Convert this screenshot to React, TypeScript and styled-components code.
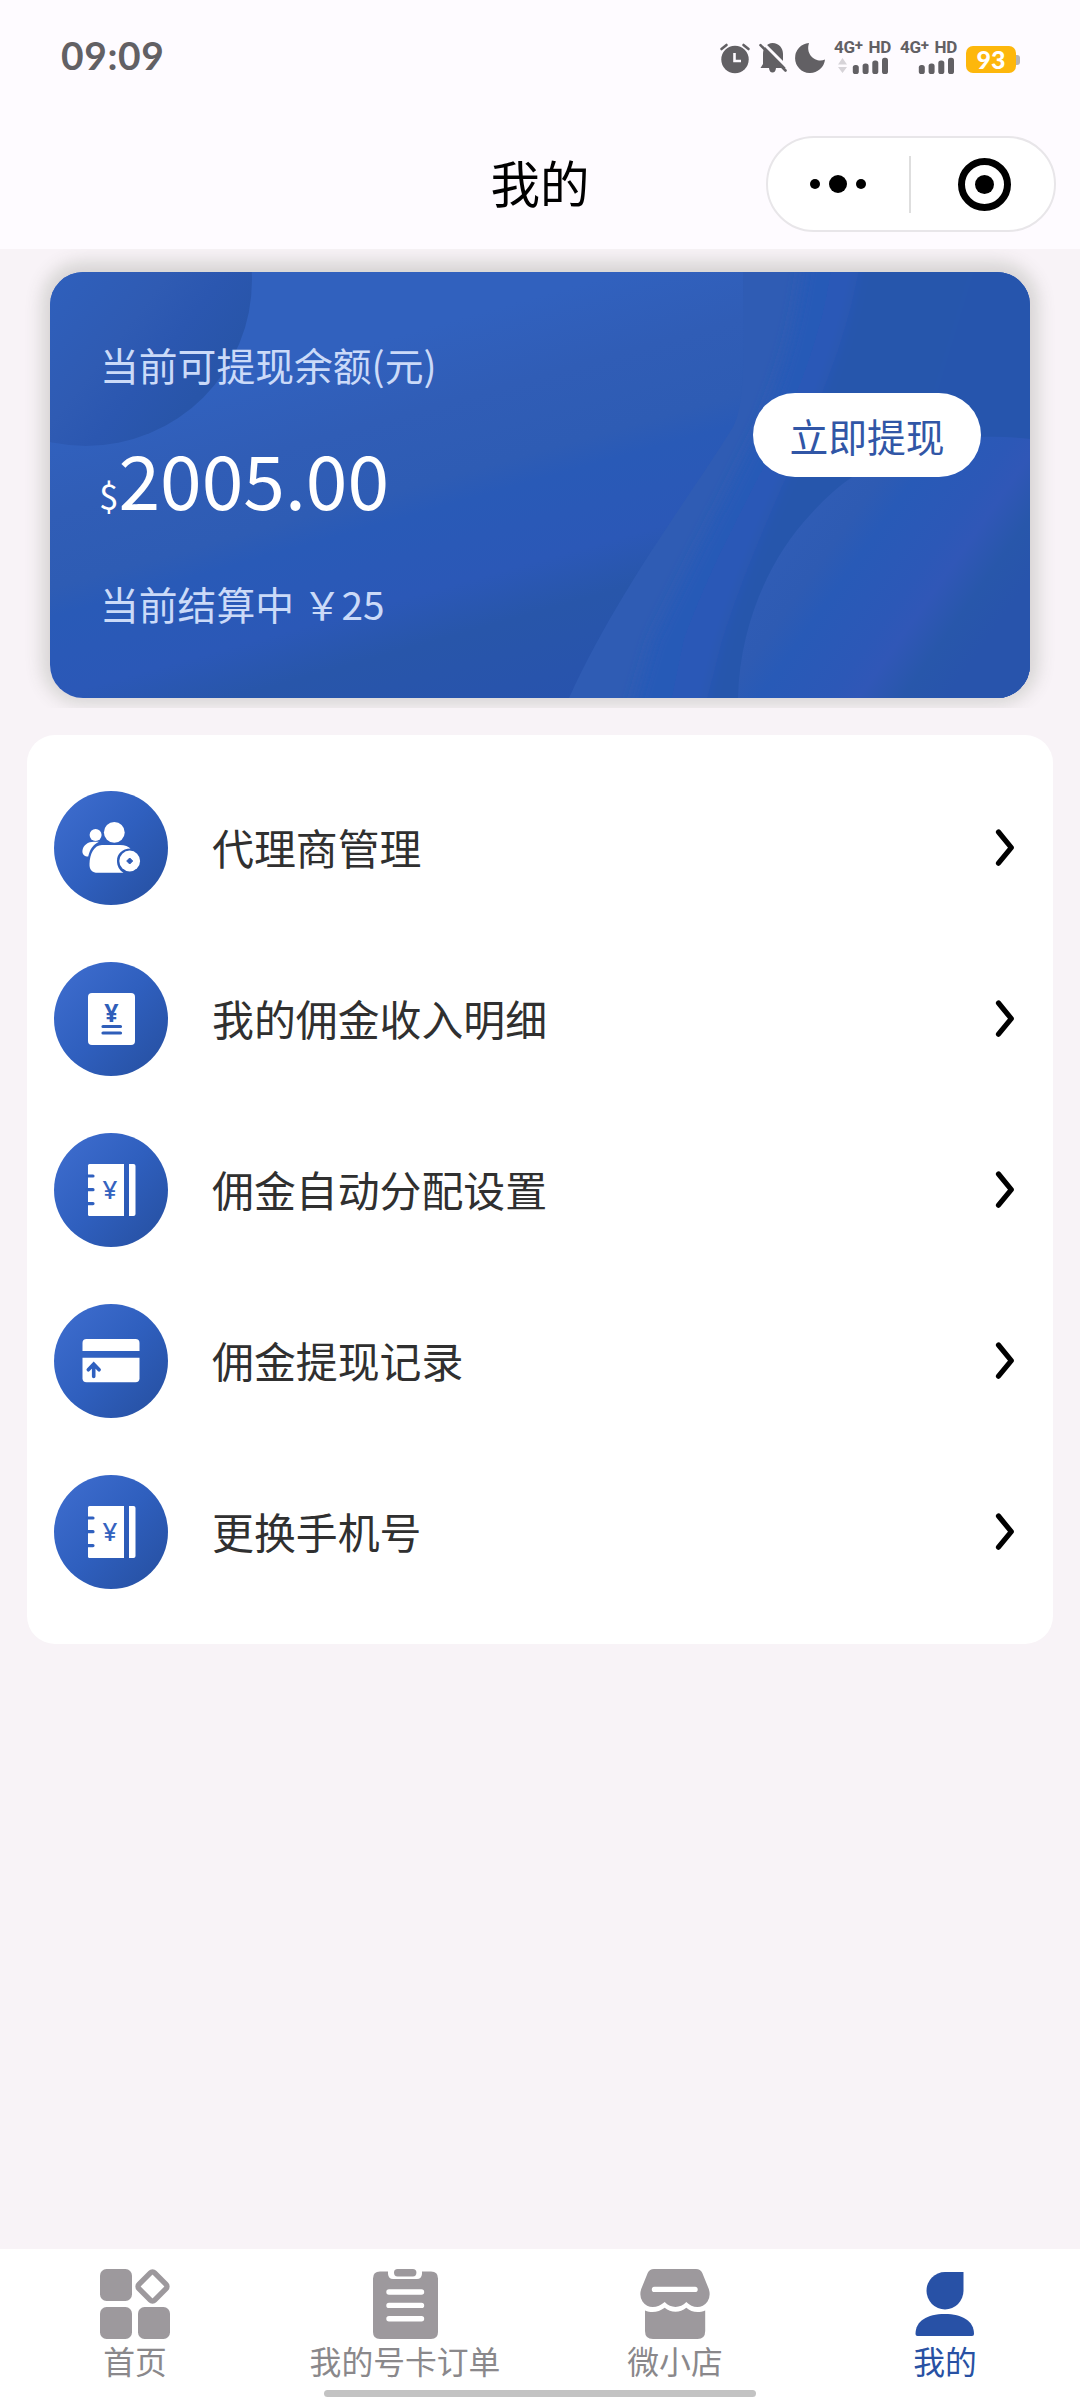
import React from "react";
import styled, { createGlobalStyle } from "styled-components";

const GlobalStyle = createGlobalStyle`
  *, *::before, *::after { box-sizing: border-box; }
  body {
    margin: 0;
    background: #f8f3f7;
    font-family: "Noto Sans CJK SC", "Noto Sans", sans-serif;
  }
  svg { display: block; }
`;

const Screen = styled.div`
  width: 1080px;
  height: 2400px;
  display: flex;
  flex-direction: column;
  overflow: hidden;
  background: #f8f3f7;
`;

/* ---------- header ---------- */

const Header = styled.header`
  height: 249px;
  flex: none;
  background: #fefbff;
`;

const StatusBar = styled.div`
  height: 113px;
  padding: 0 60px 0 61px;
  display: flex;
  justify-content: space-between;
`;

const Clock = styled.div`
  padding-top: 31px;
  font: 700 39px/48px Lato, sans-serif;
  letter-spacing: 0.6px;
  color: #626064;
`;

const StatusIcons = styled.div`
  display: flex;
  align-items: flex-start;
  padding-top: 40px;
`;

const StatusGlyph = styled.svg<{ $gap: number }>`
  margin-right: ${(p) => p.$gap}px;
  overflow: visible;
`;

const Network = styled.div<{ $gap: number }>`
  width: 57px;
  margin-right: ${(p) => p.$gap}px;
`;

const NetworkLabel = styled.div`
  display: flex;
  justify-content: space-between;
  height: 15px;
  font: 700 17px/15px Roboto, sans-serif;
  letter-spacing: -0.3px;
  color: #626064;
`;

const Plus = styled.span`
  font-size: 15px;
  line-height: 1;
  display: inline-block;
  transform: translateY(-3px);
`;

const Battery = styled.div`
  display: flex;
  align-items: center;
  padding-top: 6px;
`;

const BatteryBody = styled.div`
  width: 50px;
  height: 27px;
  border-radius: 7px;
  background: #fdb70c;
  color: #fff;
  text-align: center;
  font: 900 25px/27px Lato, sans-serif;
`;

const BatteryTip = styled.div`
  width: 4px;
  height: 10px;
  border-radius: 0 3px 3px 0;
  background: #b4b4b6;
`;

const TitleBar = styled.div`
  height: 136px;
  display: grid;
  grid-template-columns: 1fr auto 1fr;
  align-items: start;
  padding: 23px 24px 0 24px;
`;

const Title = styled.h1`
  grid-column: 2;
  margin: 0;
  font-size: 49.5px;
  font-weight: 400;
  line-height: 92px;
  color: #000;
`;

const Capsule = styled.div`
  justify-self: end;
  width: 290px;
  height: 96px;
  border: 2px solid #e8e6e9;
  border-radius: 48px;
  background: #fff;
  display: flex;
  align-items: center;
`;

const CapsuleHalf = styled.div<{ $start?: number; $end?: number }>`
  flex: 1;
  display: flex;
  align-items: center;
  justify-content: center;
  gap: 9px;
  padding-left: ${(p) => p.$start ?? 0}px;
  padding-right: ${(p) => p.$end ?? 0}px;
`;

const CapsuleDivider = styled.div`
  width: 2px;
  height: 57px;
  background: #dedede;
`;

const Dot = styled.span<{ $size: number }>`
  width: ${(p) => p.$size}px;
  height: ${(p) => p.$size}px;
  border-radius: 50%;
  background: #000;
`;

const Ring = styled.span`
  width: 53px;
  height: 53px;
  border: 7px solid #000;
  border-radius: 50%;
  display: flex;
  align-items: center;
  justify-content: center;
`;

/* ---------- balance card ---------- */

const CardFrame = styled.section`
  height: 459px;
  flex: none;
  padding: 23px 50px 10px;
  overflow: hidden;
`;

const BalanceCard = styled.div`
  position: relative;
  width: 980px;
  height: 426px;
  border-radius: 33px;
  overflow: hidden;
  display: flex;
  justify-content: space-between;
  padding: 0 49px 0 50px;
`;

const CardShadow = styled.div`
  border-radius: 33px;
  box-shadow: 0 -2px 17px 8px rgba(70, 80, 60, 0.19);
`;

const CardArt = styled.svg`
  position: absolute;
  inset: 0;
`;

const Amounts = styled.div`
  position: relative;
  display: flex;
  flex-direction: column;
`;

const Caption = styled.div<{ $top: number }>`
  margin-top: ${(p) => p.$top}px;
  font-size: 38.8px;
  line-height: 56px;
  color: #cbdaf8;
  white-space: pre;
`;

const Balance = styled.div`
  margin-top: 31px;
  height: 110px;
  display: flex;
  align-items: baseline;
  color: #fff;
  font-size: 75px;
  line-height: 110px;
`;

const Currency = styled.span`
  margin-left: -1px;
  font-size: 35px;
`;

const WithdrawButton = styled.button`
  position: relative;
  margin-top: 121px;
  width: 228px;
  height: 84px;
  border: 0;
  padding: 0;
  border-radius: 42px;
  background: #fff;
  color: #3156a6;
  font: 400 38.8px/83px "Noto Sans CJK SC", sans-serif;
`;

/* ---------- menu ---------- */

const Menu = styled.ul`
  list-style: none;
  margin: 27px 27px 0;
  padding: 27px 0;
  border-radius: 28px;
  background: #fff;
`;

const MenuRow = styled.li`
  height: 171px;
  padding: 0 38px 0 27px;
  display: flex;
  align-items: center;
`;

const MenuLabel = styled.span`
  flex: 1;
  margin-left: 44px;
  padding-bottom: 1px;
  font-size: 41.9px;
  line-height: 60px;
  color: #303030;
`;

/* ---------- tab bar ---------- */

const TabBar = styled.nav`
  margin-top: auto;
  height: 151px;
  flex: none;
  background: #fff;
  display: flex;
  flex-direction: column;
`;

const Tabs = styled.div`
  height: 141px;
  padding-top: 20px;
  display: grid;
  grid-template-columns: repeat(4, 1fr);
`;

const Tab = styled.div<{ $active?: boolean }>`
  display: flex;
  flex-direction: column;
  align-items: center;
  font-size: 31.8px;
  line-height: 43px;
  color: ${(p) => (p.$active ? "#2851a3" : "#8a888b")};
`;

const HomeIndicator = styled.div`
  align-self: center;
  width: 432px;
  height: 7px;
  border-radius: 4px;
  background: #c3c3c3;
`;

/* ---------- drawings ---------- */

const GREY = "#626064";

const Bars = ({ arrows }: { arrows?: boolean }) => (
  <svg width="57" height="20" viewBox="0 0 57 20">
    {arrows && (
      <path d="M4 9.5L8.5 3L13 9.5zM4 12L8.5 18L13 12z" fill="#d6d3d8" />
    )}
    <g fill={GREY}>
      <rect x="18.8" y="10" width="6" height="9" rx="2.6" />
      <rect x="28.6" y="8.5" width="6" height="10.5" rx="2.6" />
      <rect x="38.3" y="5.5" width="6" height="13.5" rx="2.6" />
      <rect x="48" y="2.7" width="6" height="16.3" rx="2.6" />
    </g>
  </svg>
);

const NetworkInfo = ({ arrows, gap }: { arrows?: boolean; gap: number }) => (
  <Network $gap={gap}>
    <NetworkLabel>
      <span>
        4G<Plus>+</Plus>
      </span>
      <span>HD</span>
    </NetworkLabel>
    <Bars arrows={arrows} />
  </Network>
);

const CardBackground = () => (
  <CardArt width="980" height="426" viewBox="0 0 980 426">
    <defs>
      <linearGradient id="base" gradientUnits="userSpaceOnUse" x1="0" y1="0" x2="150" y2="533">
        <stop offset="0.28" stopColor="#3161be" />
        <stop offset="0.42" stopColor="#305db6" />
        <stop offset="0.55" stopColor="#2e5cb4" />
        <stop offset="0.6" stopColor="#295ab7" />
        <stop offset="0.74" stopColor="#2b58b7" />
        <stop offset="0.83" stopColor="#2856aa" />
        <stop offset="1" stopColor="#2853ad" />
      </linearGradient>
      <linearGradient id="blob" gradientUnits="userSpaceOnUse" x1="10" y1="10" x2="150" y2="120">
        <stop offset="0" stopColor="#2f5fbb" />
        <stop offset="0.45" stopColor="#2f5bb3" />
        <stop offset="0.7" stopColor="#2b57b0" />
        <stop offset="1" stopColor="#2855a9" />
      </linearGradient>
      <linearGradient id="orb" gradientUnits="userSpaceOnUse" x1="735" y1="240" x2="930" y2="378">
        <stop offset="0" stopColor="#305db6" />
        <stop offset="0.24" stopColor="#2e5bb3" />
        <stop offset="0.36" stopColor="#285ab7" />
        <stop offset="0.6" stopColor="#2c58b7" />
        <stop offset="0.7" stopColor="#3057b7" />
        <stop offset="0.85" stopColor="#2857ab" />
        <stop offset="1" stopColor="#2854ac" />
      </linearGradient>
      <filter id="soft" x="-10%" y="-10%" width="120%" height="120%">
        <feGaussianBlur stdDeviation="7" />
      </filter>
      <clipPath id="ribbonEdge">
        <path d="M519 426C570 315 640 225 683 155C697 130 693 60 693 0H980V426z" />
      </clipPath>
    </defs>
    <rect width="980" height="426" fill="url(#base)" />
    <g clipPath="url(#ribbonEdge)">
      <rect x="500" width="480" height="426" fill="#2f5cb4" />
      <g filter="url(#soft)">
        <path d="M580 446L603 368C650 270 690 200 712 150C735 90 745 60 756 -20H1020V446z" fill="#285ab7" />
        <path d="M618 446L634 368C670 270 715 200 735 150C760 90 775 50 784 -20H1020V446z" fill="#2c58b7" />
        <path d="M652 446L672 368C700 280 735 210 760 150C785 90 800 50 812 -20H1020V446z" fill="#2857ac" />
        <path d="M930 -20C905 60 880 150 850 240H1020V-20z" fill="#2854ad" />
      </g>
    </g>
    <path d="M688 426C690 345 725 280 760 243C815 180 890 157 980 167V426z" fill="url(#orb)" />
    <circle cx="36" cy="8" r="166" fill="url(#blob)" />
  </CardArt>
);

const Badge = ({ children }: { children: React.ReactNode }) => (
  <svg width="114" height="114" viewBox="0 0 114 114">
    <defs>
      <linearGradient id="badge" x1="0.12" y1="0.15" x2="0.88" y2="0.85">
        <stop offset="0" stopColor="#3b6acb" />
        <stop offset="0.5" stopColor="#2f5fbe" />
        <stop offset="1" stopColor="#2853a7" />
      </linearGradient>
    </defs>
    <circle cx="57" cy="57" r="57" fill="url(#badge)" />
    {children}
  </svg>
);

const AgentsIcon = () => (
  <Badge>
    <circle cx="41.6" cy="44" r="6" fill="#fff" />
    <path d="M28.4 60C29 54 34 50.7 40 50.7H45C39 53.5 36 58 34.2 65.5C30.5 65.5 28.2 63.5 28.4 60z" fill="#fff" />
    <circle cx="60.3" cy="41.4" r="10.4" fill="#fff" />
    <path d="M48 54H66C71 54 74.5 55.5 76.5 57.6C68 57.8 63 63 63 70C63 75 65.5 79.5 69.5 81.8H44C38 81.8 35.3 78.5 35.5 73C35.8 63 40 54 48 54z" fill="#fff" />
    <circle cx="75.7" cy="70" r="10.4" fill="#fff" />
    <path d="M75.7 67L78.7 70L75.7 73L72.7 70z" fill="#2f5cb8" stroke="#2f5cb8" strokeLinejoin="round" />
  </Badge>
);

const StatementIcon = () => (
  <Badge>
    <rect x="34" y="31" width="47" height="52" rx="4" fill="#fff" />
    <text x="57.5" y="60" textAnchor="middle" fontFamily="Noto Sans, sans-serif" fontWeight="700" fontSize="25" fill="#2f5eb9">
      ¥
    </text>
    <path d="M49 64.5H66.500M49 71H66.500" stroke="#2f5eb9" strokeWidth="3.200" strokeLinecap="round" />
  </Badge>
);

const LedgerIcon = () => (
  <Badge>
    <path d="M35.5 31H70V83H35.5Q34 83 34 81.5V32.5Q34 31 35.5 31z" fill="#fff" />
    <path d="M75 31H79.5Q81.5 31 81.5 33V81Q81.5 83 79.5 83H75z" fill="#fff" />
    <path d="M33 43H39M33 56.7H39M33 70.6H39" stroke="#2f60bf" strokeWidth="3.2" strokeLinecap="round" />
    <text x="56" y="66" textAnchor="middle" fontFamily="Noto Sans, sans-serif" fontWeight="500" fontSize="26" fill="#3563bf">
      ¥
    </text>
  </Badge>
);

const BankCardIcon = () => (
  <Badge>
    <path d="M28.5 47V39Q28.5 35 32.5 35H81.5Q85.5 35 85.5 39V47z" fill="#fff" />
    <path d="M28.5 53.7H85.5V74.3Q85.5 78.3 81.5 78.3H32.5Q28.5 78.3 28.5 74.3z" fill="#fff" />
    <path d="M39.7 72.5V60.5M34.3 65.8L39.7 60.2L45.1 65.8" fill="none" stroke="#2f60bf" strokeWidth="3.6" strokeLinecap="round" />
  </Badge>
);

const Chevron = () => (
  <svg width="24" height="38" viewBox="0 0 24 38">
    <path d="M7.5 3L20.3 18.7L7.5 34.2" fill="none" stroke="#000" strokeWidth="5.2" strokeLinecap="round" strokeLinejoin="round" />
  </svg>
);

const TAB_GREY = "#9d999d";

const HomeIcon = () => (
  <svg width="70" height="70" viewBox="0 0 70 70">
    <g fill={TAB_GREY}>
      <rect width="32" height="32" rx="6.5" />
      <rect y="38" width="32" height="32" rx="6.5" />
      <rect x="38" y="38" width="32" height="32" rx="6.5" />
    </g>
    <rect x="41.4" y="6.4" width="22.2" height="22.2" rx="3" transform="rotate(45 52.5 17.5)" fill="none" stroke={TAB_GREY} strokeWidth="5.4" />
  </svg>
);

const OrdersIcon = () => (
  <svg width="70" height="70" viewBox="0 0 70 70">
    <path d="M10 2.4H18V5Q18.5 10 23 10H47Q51.5 10 52 5V2.4H61Q68 2.4 68 9.4V63Q68 70 61 70H10Q3 70 3 63V9.4Q3 2.4 10 2.4z" fill={TAB_GREY} />
    <rect x="24" y="0" width="22.4" height="7.4" rx="3.6" fill={TAB_GREY} />
    <path d="M19 23H51.5M19 36.4H51.5M19 49.7H51.5" stroke="#fff" strokeWidth="5.4" strokeLinecap="round" />
  </svg>
);

const ShopIcon = () => (
  <svg width="70" height="70" viewBox="0 0 70 70">
    <path d="M14 0H56Q60.5 0 62.3 4L68.8 20Q71 27 67.5 32.5C62 40.5 52 39 46.3 33C40 39.5 31 39.5 24.7 33C18 39 8 40.5 2.5 32.5Q-1 27 1.2 20L7.7 4Q9.5 0 14 0z" fill={TAB_GREY} />
    <path d="M14.5 20.4H55" stroke="#fff" strokeWidth="5.4" strokeLinecap="round" />
    <path d="M5 41.5C12 44.500 19 43 24.700 38.800C31 44.200 40 44.200 46.300 38.800C51 43 58 44.500 65.200 41.500V62Q65.200 70 57.500 70H13Q5 70 5 62z" fill={TAB_GREY} />
  </svg>
);

const ProfileIcon = () => (
  <svg width="70" height="70" viewBox="0 0 70 70">
    <path d="M35 3H53.5V21.7A18.5 18.7 0 1 1 35 3z" fill="#2851a6" />
    <path d="M5.500 65C5.500 52 17 45 34.700 45S64 52 64 65Q64 67 62 67H7.500Q5.500 67 5.500 65z" fill="#2851a6" />
  </svg>
);

const menu = [
  { label: "代理商管理", Icon: AgentsIcon },
  { label: "我的佣金收入明细", Icon: StatementIcon },
  { label: "佣金自动分配设置", Icon: LedgerIcon },
  { label: "佣金提现记录", Icon: BankCardIcon },
  { label: "更换手机号", Icon: LedgerIcon },
];

const tabs = [
  { label: "首页", Icon: HomeIcon },
  { label: "我的号卡订单", Icon: OrdersIcon },
  { label: "微小店", Icon: ShopIcon },
  { label: "我的", Icon: ProfileIcon, active: true },
];

export default function App() {
  return (
    <Screen>
      <GlobalStyle />
      <Header>
        <StatusBar>
          <Clock>09:09</Clock>
          <StatusIcons>
            <StatusGlyph $gap={9} width="30" height="34" viewBox="0 0 30 34">
              <circle cx="15" cy="19.5" r="13.7" fill={GREY} />
              <path d="M1.500 9L6.500 5M28.500 9L23.500 5" stroke={GREY} strokeWidth="2.600" strokeLinecap="round" />
              <path d="M14.500 13V21H21" fill="none" stroke="#fefbff" strokeWidth="2.600" />
            </StatusGlyph>
            <StatusGlyph $gap={9} width="27" height="34" viewBox="0 0 27 34">
              <path d="M13.500 3C20 3 24 8 24 14V24L27 28H17Q16.500 32.500 13.500 32.500T10 28H1.500L4 24V14C4 8 8 3 13.500 3z" fill={GREY} />
              <path d="M3 2L29 28" stroke="#fefbff" strokeWidth="3" />
              <path d="M1.500 5.200L26.500 30.500" stroke={GREY} strokeWidth="2.600" strokeLinecap="round" />
            </StatusGlyph>
            <StatusGlyph $gap={9} width="30" height="34" viewBox="0 0 30 34">
              <path d="M14 3A15 15 0 1 0 30 19.500C22 23.500 10 15.500 14 3z" fill={GREY} />
            </StatusGlyph>
            <NetworkInfo arrows gap={9} />
            <NetworkInfo gap={9} />
            <Battery>
              <BatteryBody>93</BatteryBody>
              <BatteryTip />
            </Battery>
          </StatusIcons>
        </StatusBar>
        <TitleBar>
          <Title>我的</Title>
          <Capsule>
            <CapsuleHalf $end={2}>
              <Dot $size={10} />
              <Dot $size={18} />
              <Dot $size={10} />
            </CapsuleHalf>
            <CapsuleDivider />
            <CapsuleHalf $start={4}>
              <Ring>
                <Dot $size={19} />
              </Ring>
            </CapsuleHalf>
          </Capsule>
        </TitleBar>
      </Header>

      <CardFrame>
        <CardShadow>
          <BalanceCard>
            <CardBackground />
            <Amounts>
              <Caption $top={64}>当前可提现余额(元)</Caption>
              <Balance>
                <Currency>$</Currency>2005.00
              </Balance>
              <Caption $top={42}>当前结算中 ￥25</Caption>
            </Amounts>
            <WithdrawButton>立即提现</WithdrawButton>
          </BalanceCard>
        </CardShadow>
      </CardFrame>

      <Menu>
        {menu.map(({ label, Icon }) => (
          <MenuRow key={label}>
            <Icon />
            <MenuLabel>{label}</MenuLabel>
            <Chevron />
          </MenuRow>
        ))}
      </Menu>

      <TabBar>
        <Tabs>
          {tabs.map(({ label, Icon, active }) => (
            <Tab key={label} $active={active}>
              <Icon />
              {label}
            </Tab>
          ))}
        </Tabs>
        <HomeIndicator />
      </TabBar>
    </Screen>
  );
}
